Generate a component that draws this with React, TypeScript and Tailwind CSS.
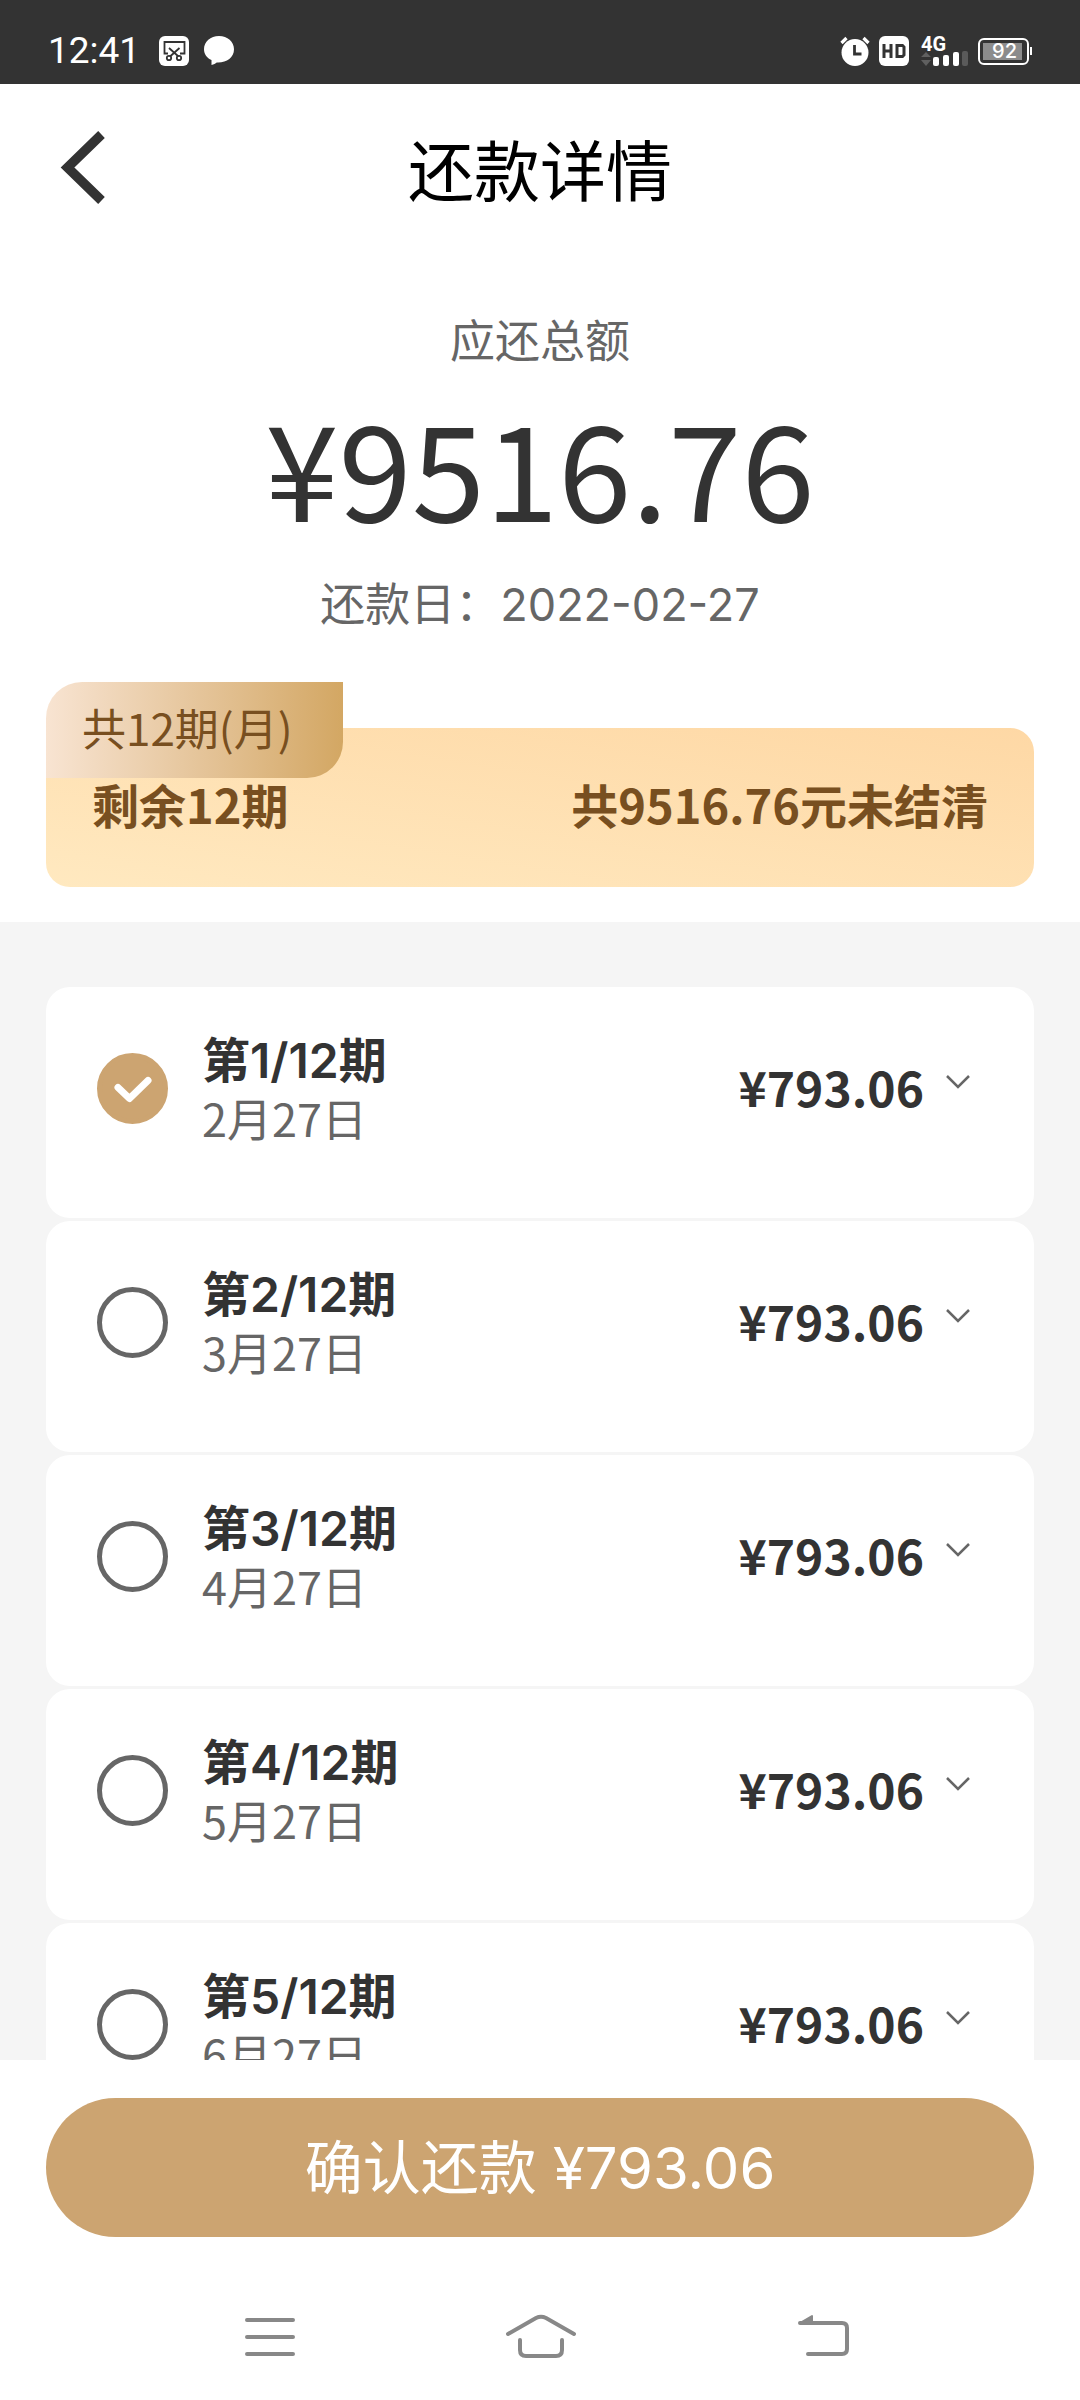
import { useState } from "react";

interface Period {
  index: number;
  date: string;
}

const TOTAL_PERIODS = 12;
const AMOUNT = "793.06";

const periods: Period[] = [
  { index: 1, date: "2月27日" },
  { index: 2, date: "3月27日" },
  { index: 3, date: "4月27日" },
  { index: 4, date: "5月27日" },
  { index: 5, date: "6月27日" },
];

function StatusBar() {
  return (
    <div className="flex h-[84px] shrink-0 items-center justify-between bg-[#333333] pt-[18px] pr-12 pl-12 text-white">
      <div className="flex items-center">
        <span className="w-[111px] font-['Roboto',sans-serif] text-[37px] leading-[40px]">12:41</span>
        {/* Screenshot */}
        <svg className="h-[30px] w-[30px]" viewBox="0 0 30 30" fill="none">
          <rect width="30" height="30" rx="6" fill="#fff" />
          <g stroke="#333" strokeWidth="1.8">
            <path d="M9 17.500H5.500V6h20v11.500H21" />
            <path d="M10 12l9.500 8.500M20.500 12L11 20.500" />
            <circle cx="10" cy="22" r="2.200" />
            <circle cx="20" cy="22" r="2.200" />
          </g>
        </svg>
        {/* Message */}
        <svg className="ml-[15px] h-[30px] w-[30px]" viewBox="0 0 30 30" fill="#fff">
          <path d="M15 0C6.500 0 0 5.800 0 13.200c0 5 2.900 8.700 7.500 10.900V29c2.200-.6 4-1.500 5.200-2.600C22 27 30 22 30 13.200 30 5.800 23.500 0 15 0z" />
        </svg>
      </div>
      <div className="flex items-center">
        {/* Alarm */}
        <svg className="h-[30px] w-[30px]" viewBox="0 0 30 30" fill="none">
          <circle cx="15" cy="16.500" r="13.500" fill="#fff" />
          <path d="M1.500 7L6.500 2M28.500 7L23.500 2" stroke="#fff" strokeWidth="3.200" />
          <path d="M14.500 9v9h7" stroke="#333" strokeWidth="2.800" />
        </svg>
        {/* HD */}
        <svg className="ml-[9px] h-[30px] w-[30px]" viewBox="0 0 30 30" fill="none">
          <rect width="30" height="30" rx="6" fill="#fff" />
          <path d="M5 8v14M12 8v14M5 15h7M18 9.500h5.500l1.500 1.500v8l-1.500 1.500H18z" stroke="#333" strokeWidth="3" />
        </svg>
        {/* Signal */}
        <div className="ml-3 h-[30px] w-[48px]">
          <div className="h-[15px] font-['Roboto',sans-serif] text-[20px] leading-[16px] font-bold">4G</div>
          <svg className="h-[16px] w-[48px]" viewBox="0 0 48 16">
            <path d="M0 6l5-5 5 5zM0 9h10l-5 6z" fill="#606060" />
            <rect x="12" y="6" width="6" height="9" rx="2" fill="#fff" />
            <rect x="22" y="4" width="6" height="11" rx="2" fill="#fff" />
            <rect x="32" y="1" width="6" height="14" rx="2" fill="#fff" />
            <rect x="41" y="0" width="6" height="15" rx="2" fill="#5a5a5a" />
          </svg>
        </div>
        {/* Battery */}
        <div className="ml-[9px] flex items-center">
          <div className="h-[27px] w-[51px] rounded-[6px] border-2 border-white p-[3px]">
            <div className="h-[17px] w-[39px] bg-[#8c8c8c] pl-1 text-center font-['Inter',sans-serif] text-[20px] leading-[17px] font-medium">
              92
            </div>
          </div>
          <div className="ml-px h-2 w-[2px] bg-white" />
        </div>
      </div>
    </div>
  );
}

interface PeriodRowProps {
  period: Period;
  checked: boolean;
  onToggle: () => void;
}

function PeriodRow({ period, checked, onToggle }: PeriodRowProps) {
  const id = `period-${period.index}`;

  return (
    <li className="flex items-center rounded-3xl bg-white pt-[44px] pr-[64px] pb-[73px] pl-[51px]">
      <div className="relative h-[71px] w-[71px] shrink-0">
        <input
          id={id}
          type="checkbox"
          checked={checked}
          onChange={onToggle}
          className="block h-full w-full appearance-none rounded-full border-[5px] border-[#666666] checked:border-[#cca471] checked:bg-[#cca471]"
        />
        {checked && (
          <svg className="pointer-events-none absolute inset-0 h-full w-full" viewBox="0 0 71 71" fill="none">
            <path d="M21 34.500L32.500 45.500L51 27.500" stroke="#fff" strokeWidth="7" strokeLinecap="round" strokeLinejoin="round" />
          </svg>
        )}
      </div>
      <label htmlFor={id} className="ml-[34px] flex-1">
        <span className="block font-['Inter','Noto_Sans_CJK_SC',sans-serif] text-[48px] leading-[60px] font-semibold text-[#333333]">
          第{period.index}/{TOTAL_PERIODS}期
        </span>
        <span className="block text-[45px] leading-[54px] text-[#666666]">{period.date}</span>
      </label>
      <button type="button" className="flex items-center gap-[22px] pb-1">
        <span className="text-[48px] leading-[60px] font-bold text-[#333333]">¥{AMOUNT}</span>
        <svg className="h-6 w-6" viewBox="0 0 24 24" fill="none">
          <path d="M1 2l11 11L23 2" stroke="#666" strokeWidth="2.500" />
        </svg>
      </button>
    </li>
  );
}

export default function App() {
  const [selected, setSelected] = useState<number[]>([1]);

  const toggle = (index: number) => {
    setSelected((prev) => (prev.includes(index) ? prev.filter((i) => i !== index) : [...prev, index]));
  };

  return (
    <div className="flex h-screen flex-col bg-white font-['Noto_Sans_CJK_SC',sans-serif]">
      <StatusBar />

      {/* Header */}
      <header className="grid h-[166px] shrink-0 grid-cols-[1fr_auto_1fr] items-center">
        <button type="button" aria-label="返回" className="ml-[60px] h-[76px] w-[48px]">
          <svg className="h-full w-full" viewBox="0 0 48 76" fill="none">
            <path d="M41.500 5.500L7.500 38.500L41.500 71.500" stroke="#333" strokeWidth="9.500" />
          </svg>
        </button>
        <h1 className="text-[66px] leading-[80px] text-black">还款详情</h1>
      </header>

      {/* Summary */}
      <section className="shrink-0 px-[46px] pt-[57px] pb-[35px]">
        <div className="text-center">
          <p className="text-[45px] leading-[64px] text-[#666666]">应还总额</p>
          <p className="mt-[14px] text-[132px] leading-[160px] text-[#333333]">¥9516.76</p>
          <p className="mt-[28px] font-['Inter','Noto_Sans_CJK_SC',sans-serif] text-[45px] leading-[64px] text-[#666666]">
            还款日：2022-02-27
          </p>
        </div>
        <div className="relative mt-[45px] pt-[46px]">
          <div className="flex h-[159px] items-center justify-between rounded-3xl bg-linear-to-tr from-[#ffe9c0] to-[#fed8a5] px-[46px] pb-2 text-[47px] leading-[60px] font-bold text-[#784f20]">
            <span>剩余12期</span>
            <span>共9516.76元未结清</span>
          </div>
          <div className="absolute top-0 left-0 h-[96px] rounded-tl-[36px] rounded-br-[36px] bg-linear-to-r from-[#f8e4d2] to-[#d3a763] pr-[50px] pl-[36px] text-[44px] leading-[90px] text-[#784f20]">
            共12期(月)
          </div>
        </div>
      </section>

      {/* Periods */}
      <main className="min-h-0 flex-1 overflow-y-auto bg-[#f5f5f5] px-[46px] pt-[65px] [scrollbar-width:none]">
        <ul className="flex flex-col gap-[3px]">
          {periods.map((period) => (
            <PeriodRow
              key={period.index}
              period={period}
              checked={selected.includes(period.index)}
              onToggle={() => toggle(period.index)}
            />
          ))}
        </ul>
      </main>

      {/* Confirm */}
      <div className="shrink-0 px-[46px] pt-[38px] pb-[35px]">
        <button
          type="button"
          className="h-[139px] w-full rounded-full bg-[#cca471] font-['Inter','Noto_Sans_CJK_SC',sans-serif] text-[58px] leading-[72px] text-white"
        >
          确认还款 ¥{AMOUNT}
        </button>
      </div>

      {/* System navigation */}
      <nav className="grid h-[128px] shrink-0 grid-cols-3 place-items-center px-[135px]">
        <button type="button" aria-label="菜单">
          <svg className="h-[48px] w-[76px]" viewBox="0 0 76 48" fill="none" stroke="#888" strokeWidth="4" strokeLinecap="round">
            <path d="M15 8h46M15 25h46M15 42h46" />
          </svg>
        </button>
        <button type="button" aria-label="主页">
          <svg className="h-[48px] w-[76px]" viewBox="0 0 76 48" fill="none" stroke="#888" strokeWidth="4" strokeLinecap="round" strokeLinejoin="round">
            <path d="M6 22L34 6q5-2.500 10 0L72 22" />
            <path d="M18 28v10q0 6 6 6h30q6 0 6-6V28" />
          </svg>
        </button>
        <button type="button" aria-label="后退">
          <svg className="h-[48px] w-[102px]" viewBox="0 0 102 48" fill="none" stroke="#888" strokeWidth="4" strokeLinecap="round" strokeLinejoin="round">
            <path d="M41 11h42q5 0 5 5v21q0 5-5 5H49" />
            <path d="M41 11l12-7v7z" fill="#888" strokeWidth="2" />
          </svg>
        </button>
      </nav>
    </div>
  );
}
